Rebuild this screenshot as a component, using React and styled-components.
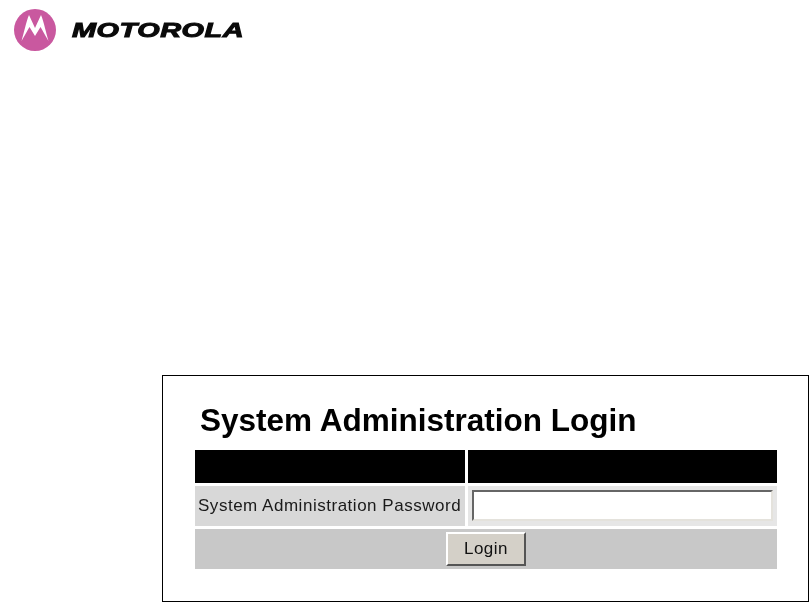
import React from "react";
import styled, { createGlobalStyle } from "styled-components";

const GlobalStyle = createGlobalStyle`
  html, body {
    margin: 0;
    padding: 0;
    background: #fff;
  }
  body {
    font-family: "Liberation Sans", Arial, sans-serif;
    color: #000;
    overflow: hidden;
  }
`;

const Page = styled.div`
  width: 811px;
  height: 602px;
  display: flex;
  flex-direction: column;
`;

const Header = styled.header`
  height: 375px;
  box-sizing: border-box;
  padding: 9px 0 0 14px;
  display: flex;
  align-items: flex-start;
  gap: 16px;
`;

const LogoMark = styled.svg`
  width: 42px;
  height: 42px;
  flex: none;
  filter: blur(0.3px);
`;

const LogoText = styled.div`
  margin-top: 10px;
  width: 172px;
  font-size: 20px;
  line-height: 23px;
  font-weight: 700;
  font-style: italic;
  letter-spacing: 0.4px;
  white-space: nowrap;
  color: #0a0a0a;
  -webkit-text-stroke: 1px #0a0a0a;
  transform: scaleX(1.44);
  transform-origin: left center;
`;

const Frame = styled.section`
  margin-left: 162px;
  width: 647px;
  height: 227px;
  box-sizing: border-box;
  border: 1px solid #000;
  padding: 27px 31px 0 32px;
`;

const Title = styled.h1`
  margin: 0 0 12px 5px;
  font-size: 31.5px;
  line-height: 35px;
  font-weight: 700;
  filter: blur(0.35px);
  white-space: nowrap;
`;

const Table = styled.div`
  width: 582px;
  display: grid;
  grid-template-columns: 270px 309px;
  grid-template-rows: 33px 40px 40px;
  gap: 3px;
`;

const HeadCell = styled.div`
  background: #000;
`;

const LabelCell = styled.div`
  background: #d8d8d8;
  display: flex;
  align-items: center;
  padding-left: 3px;
  font-size: 17px;
  letter-spacing: 0.52px;
  color: #1a1a1a;
  white-space: nowrap;
  filter: blur(0.3px);
`;

const FieldCell = styled.div`
  background: #e6e6e6;
  display: flex;
  align-items: flex-start;
  padding: 4px 4px 0;
`;

const PasswordInput = styled.input`
  width: 100%;
  height: 31px;
  box-sizing: border-box;
  border: 2px solid;
  border-color: #666 #e4e2dc #e4e2dc #666;
  background: #fff;
  outline: none;
  padding: 0 2px;
`;

const ButtonRow = styled.div`
  grid-column: 1 / -1;
  background: #c8c8c8;
  display: flex;
  align-items: center;
  justify-content: center;
`;

const LoginButton = styled.button`
  width: 80px;
  height: 34px;
  box-sizing: border-box;
  background: #d4d0c8;
  border: 2px solid;
  border-color: #fff #555 #555 #fff;
  font-family: "Liberation Sans", Arial, sans-serif;
  font-size: 17px;
  letter-spacing: 0.5px;
  color: #111;
  padding: 0;
  filter: blur(0.3px);
`;

function MotorolaLogo() {
  return (
    <LogoMark viewBox="0 0 42 42" aria-hidden="true">
      <circle cx="21" cy="21" r="21" fill="#c9589f" />
      <path
        fill="#fff"
        d="M7.5 32 C10 24 12 13 15 6 L21 19 L27 6 C30 13 32 24 34.5 32 C31.5 27 29 22 26.5 18 L21 27 L15.5 18 C13 22 10.5 27 7.5 32 Z"
      />
    </LogoMark>
  );
}

export default function App() {
  return (
    <Page>
      <GlobalStyle />
      <Header>
        <MotorolaLogo />
        <LogoText>MOTOROLA</LogoText>
      </Header>
      <Frame>
        <Title>System Administration Login</Title>
        <Table>
          <HeadCell />
          <HeadCell />
          <LabelCell>System Administration Password</LabelCell>
          <FieldCell>
            <PasswordInput type="password" />
          </FieldCell>
          <ButtonRow>
            <LoginButton>Login</LoginButton>
          </ButtonRow>
        </Table>
      </Frame>
    </Page>
  );
}
